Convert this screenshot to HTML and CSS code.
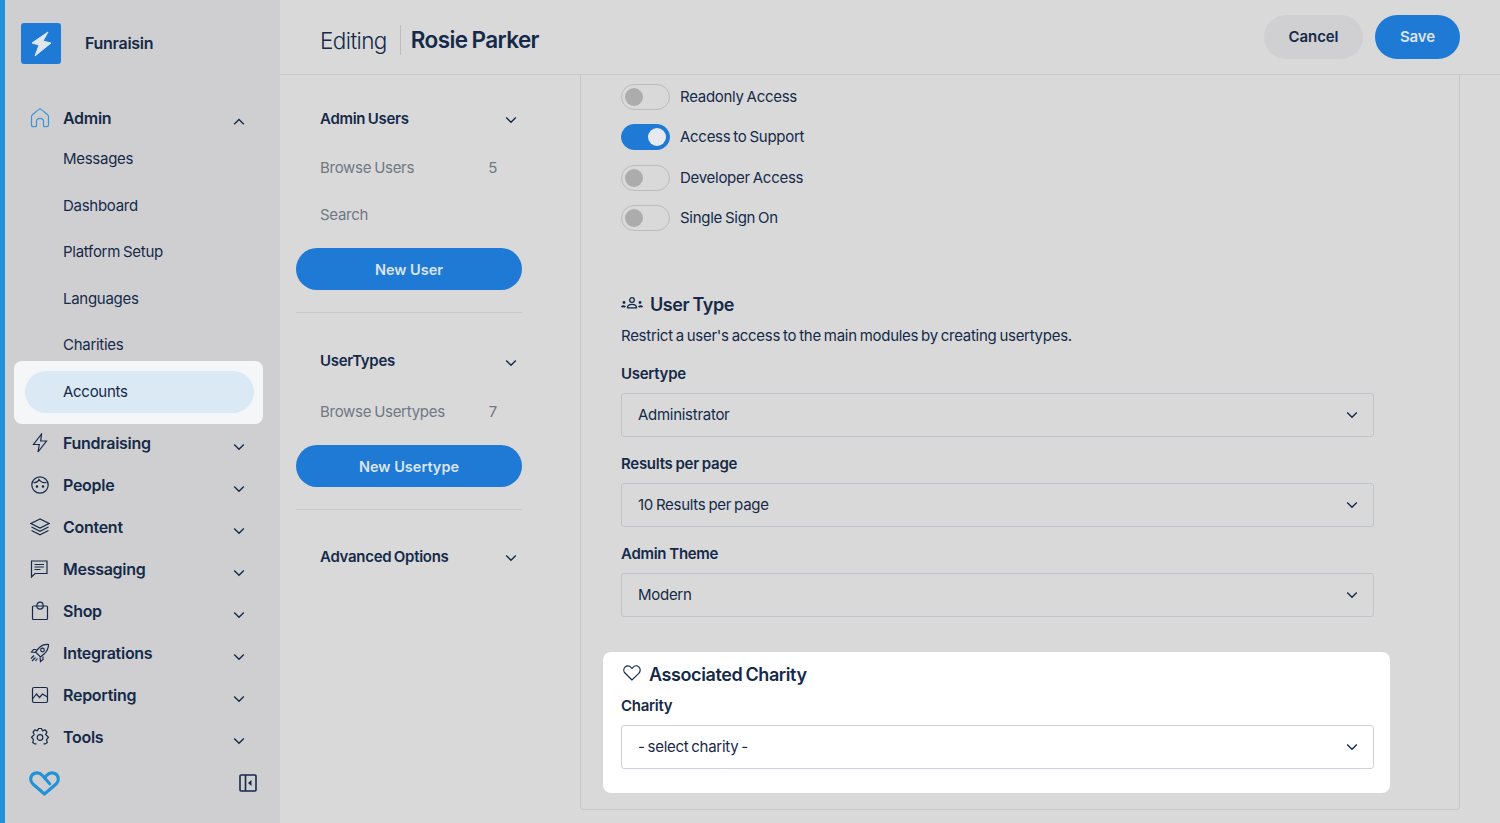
FILE: index.html
```html
<!DOCTYPE html>
<html lang="en">
<head>
    <meta charset="UTF-8">
    <meta name="viewport" content="width=device-width, initial-scale=1.0">
    <title>Editing Rosie Parker</title>
    <link rel="stylesheet" href="styles.css">
</head>
<body>
<svg class="sprite" width="0" height="0">
    <symbol id="chev-down" viewBox="0 0 12 8"><path d="M1.2 1.5 6 6.2l4.8-4.7" fill="none" stroke="currentColor" stroke-width="1.4"/></symbol>
    <symbol id="chev-up" viewBox="0 0 12 8"><path d="M1.2 6.2 6 1.5l4.8 4.7" fill="none" stroke="currentColor" stroke-width="1.4"/></symbol>
</svg>

<aside class="sidebar">
    <div class="brand">
        <div class="brand-logo">
            <svg viewBox="0 0 40 41" width="40" height="41"><path d="M27 9 11 20l7 2-4 11 16-13-8-2z" fill="#dfe8ef" stroke="#dfe8ef" stroke-width="1" stroke-linejoin="round"/></svg>
        </div>
        <span class="brand-name">Funraisin</span>
    </div>

    <nav class="nav">
        <div class="nav-item nav-item-open">
            <svg class="nav-icon nav-icon-home" viewBox="0 0 20 20"><path d="M1.500 17V8.600c0-.7.3-1.300.8-1.800L8.600 1.600c.8-.7 2-.7 2.800 0l6.300 5.200c.5.5.8 1.100.8 1.800V17c0 1-.7 1.700-1.700 1.700h-2.300c-.6 0-1-.4-1-1v-4.200c0-1.800-1.500-3.200-3.500-3.200s-3.500 1.400-3.500 3.200v4.200c0 .6-.4 1-1 1H3.200c-1 0-1.700-.7-1.700-1.700z"/></svg>
            <span>Admin</span>
            <svg class="chev"><use href="#chev-up"/></svg>
        </div>
        <div class="sub-list">
            <a class="sub-item">Messages</a>
            <a class="sub-item">Dashboard</a>
            <a class="sub-item">Platform Setup</a>
            <a class="sub-item">Languages</a>
            <a class="sub-item">Charities</a>
            <div class="sub-highlight"><a class="sub-active">Accounts</a></div>
        </div>
        <div class="nav-item">
            <svg class="nav-icon" viewBox="0 0 20 20"><path d="M11.500 1 3.500 11.500h5.800L8 19l8.500-11h-5.800z"/></svg>
            <span>Fundraising</span>
            <svg class="chev"><use href="#chev-down"/></svg>
        </div>
        <div class="nav-item">
            <svg class="nav-icon" viewBox="0 0 20 20"><circle cx="10" cy="10" r="8.200"/><path d="M3.500 7.500C6 8 8 6.800 9 4.500c1.500 2.500 4 3.500 7.500 3"/><circle cx="7" cy="11.500" r=".7" fill="currentColor"/><circle cx="13" cy="11.500" r=".7" fill="currentColor"/></svg>
            <span>People</span>
            <svg class="chev"><use href="#chev-down"/></svg>
        </div>
        <div class="nav-item">
            <svg class="nav-icon" viewBox="0 0 20 20"><path d="M10 2 1 6.500 10 11l9-4.500z"/><path d="m1.500 10 8.500 4.300 8.500-4.300"/><path d="m1.500 13.500 8.500 4.300 8.500-4.300"/></svg>
            <span>Content</span>
            <svg class="chev"><use href="#chev-down"/></svg>
        </div>
        <div class="nav-item">
            <svg class="nav-icon" viewBox="0 0 20 20"><path d="M1.500 2h15.500v12.500H5L1.500 18z"/><path d="M4.500 5.500h9.500M4.500 8h9.500M4.500 10.500h6"/></svg>
            <span>Messaging</span>
            <svg class="chev"><use href="#chev-down"/></svg>
        </div>
        <div class="nav-item">
            <svg class="nav-icon" viewBox="0 0 20 20"><path d="M3.500 5h13c.6 0 1 .4 1 1v11.500c0 .6-.4 1-1 1h-13c-.6 0-1-.4-1-1V6c0-.6.4-1 1-1z"/><path d="M6.800 5c0-2.300 1.300-3.800 3.200-3.800s3.200 1.500 3.200 3.800c0 1.800-1.300 3.200-3.200 3.200S6.800 6.800 6.800 5z"/></svg>
            <span>Shop</span>
            <svg class="chev"><use href="#chev-down"/></svg>
        </div>
        <div class="nav-item">
            <svg class="nav-icon" viewBox="0 0 20 20"><path d="M18.500 1.500c-4-.3-7.500 1-10 4L5.500 9l5 5 3.500-3c3-2.500 4.500-6 4.500-9.500z"/><circle cx="12.500" cy="7" r="1.800"/><path d="M6.500 6.500H3.500L1.500 9l4 .5M13 13.500v3l-2.500 2-.5-4M4 12.500 1 15.500M5.500 14.500 2 18M7.500 15.500l-2 2.500"/></svg>
            <span>Integrations</span>
            <svg class="chev"><use href="#chev-down"/></svg>
        </div>
        <div class="nav-item">
            <svg class="nav-icon" viewBox="0 0 20 20"><rect x="2.500" y="2.500" width="15" height="15" rx="1.500"/><path d="m2.500 14 4-5 3 3.500 3-3.500 5 3"/></svg>
            <span>Reporting</span>
            <svg class="chev"><use href="#chev-down"/></svg>
        </div>
        <div class="nav-item">
            <svg class="nav-icon" viewBox="0 0 20 20"><circle cx="10" cy="10.500" r="2.800"/><path d="M4.400 7.500 3 5l1.800-2 2.700.7L8.600 1.500h2.800l1.100 2.200 2.700-.7L17 5l-1.400 2.500 2.900 2.700-2 2.400.8 2.800-2 1.500h-1.800M4.400 7.500 1.500 10.200l2 2.400-.8 2.800 2 1.500h1.800"/></svg>
            <span>Tools</span>
            <svg class="chev"><use href="#chev-down"/></svg>
        </div>
    </nav>

    <div class="sidebar-foot">
        <svg class="foot-heart" viewBox="0 0 30 24"><path d="M15 22.200 3.800 12.500C.4 9.400 1.200 4 5 2.300c3-1.300 6-.3 8 2l7 8M15 22.200l11.200-9.700c3.400-3.100 2.600-8.500-1.200-10.200-3-1.300-6-.3-8 2l-2 2.500"/></svg>
        <svg class="foot-collapse" viewBox="0 0 18 18"><rect x="1" y="1" width="16" height="16" rx="1"/><path d="M6.500 1v16"/><path d="M12.500 6v6L9 9z" fill="currentColor" stroke="none"/></svg>
    </div>
</aside>

<div class="main">
    <header class="topbar">
        <div class="page-title">
            <span class="title-light">Editing</span>
            <span class="title-name">Rosie Parker</span>
        </div>
        <div class="top-actions">
            <button class="btn btn-cancel">Cancel</button>
            <button class="btn btn-save">Save</button>
        </div>
    </header>

    <div class="content">
        <div class="subnav">
            <div class="subnav-group">
                <div class="subnav-head"><span>Admin Users</span><svg class="chev"><use href="#chev-down"/></svg></div>
                <div class="subnav-link"><span>Browse Users</span><span>5</span></div>
                <div class="subnav-link"><span>Search</span></div>
                <button class="btn-wide">New User</button>
            </div>
            <div class="subnav-group">
                <div class="subnav-head"><span>UserTypes</span><svg class="chev"><use href="#chev-down"/></svg></div>
                <div class="subnav-link"><span>Browse Usertypes</span><span>7</span></div>
                <button class="btn-wide">New Usertype</button>
            </div>
            <div class="subnav-head"><span>Advanced Options</span><svg class="chev"><use href="#chev-down"/></svg></div>
        </div>

        <div class="panel">
            <div class="toggle-list">
                <div class="toggle-row"><span class="toggle"></span><span class="toggle-label">Readonly Access</span></div>
                <div class="toggle-row"><span class="toggle toggle-on"></span><span class="toggle-label">Access to Support</span></div>
                <div class="toggle-row"><span class="toggle"></span><span class="toggle-label">Developer Access</span></div>
                <div class="toggle-row"><span class="toggle"></span><span class="toggle-label">Single Sign On</span></div>
            </div>

            <section class="user-type">
                <h2 class="section-title">
                    <svg class="section-icon-users" viewBox="0 0 22 12"><circle cx="11" cy="3" r="2.300"/><path d="M6.500 10.800c0-2.500 2-3.500 4.500-3.500s4.500 1 4.500 3.500z"/><circle cx="3" cy="5.500" r="1.400" fill="currentColor" stroke="none"/><circle cx="19" cy="5.500" r="1.400" fill="currentColor" stroke="none"/><path d="M.8 10.200c.5-1.300 3-1.300 3.500 0M17.700 10.200c.5-1.300 3-1.300 3.500 0" stroke-width="1.800"/></svg>
                    User Type
                </h2>
                <p class="section-desc">Restrict a user's access to the main modules by creating usertypes.</p>
                <div class="field">
                    <label class="field-label">Usertype</label>
                    <div class="select"><span>Administrator</span><svg class="chev"><use href="#chev-down"/></svg></div>
                </div>
                <div class="field">
                    <label class="field-label">Results per page</label>
                    <div class="select"><span>10 Results per page</span><svg class="chev"><use href="#chev-down"/></svg></div>
                </div>
                <div class="field">
                    <label class="field-label">Admin Theme</label>
                    <div class="select"><span>Modern</span><svg class="chev"><use href="#chev-down"/></svg></div>
                </div>
            </section>

            <section class="charity-card">
                <h2 class="section-title">
                    <svg class="section-icon-heart" viewBox="0 0 18 16"><path d="M9 15 2.200 8.300C.4 6.500.4 3.700 2 2.100c1.700-1.600 4.400-1.500 6 .2l1 1 1-1c1.600-1.700 4.300-1.800 6-.2 1.600 1.600 1.600 4.400-.2 6.200z"/></svg>
                    Associated Charity
                </h2>
                <div class="field">
                    <label class="field-label">Charity</label>
                    <div class="select"><span>- select charity -</span><svg class="chev"><use href="#chev-down"/></svg></div>
                </div>
            </section>
        </div>
    </div>
</div>
</body>
</html>
```

FILE: styles.css
```css
* {
    box-sizing: border-box;
}
html, body {
    height: 100%;
}
body {
    margin: 0;
    display: flex;
    height: 823px;
    overflow: hidden;
    background-color: #d9d9d9;
    color: #152a49;
    font-family: Inter, "Liberation Sans", sans-serif;
    font-size: 15px;
    letter-spacing: -0.28px;
    word-spacing: -1px;
}
.sprite {
    position: absolute;
}
.chev {
    width: 12px;
    height: 8px;
    flex: none;
    color: #152a49;
}

/* Sidebar */
.sidebar {
    width: 280px;
    flex: none;
    display: flex;
    flex-direction: column;
    background-color: #cfcfd1;
    border-left: 5px solid #2391d6;
}
.brand {
    height: 98px;
    display: flex;
    align-items: flex-start;
    padding: 23px 0 0 16px;
}
.brand-logo {
    width: 40px;
    height: 41px;
    background-color: #1f7ad6;
    border-radius: 3px;
}
.brand-name {
    margin: 10px 0 0 24px;
    font-size: 16px;
    font-weight: 600;
}
.nav-item {
    height: 42px;
    display: flex;
    align-items: center;
    padding-left: 25px;
    font-size: 16px;
    font-weight: 600;
}
.nav-item span {
    flex: 1;
    margin-left: 13px;
}
.nav-item .chev {
    margin: 8px 35px 0 0;
}
.nav-item-open {
    height: 40px;
}
.nav-icon {
    width: 20px;
    height: 20px;
    fill: none;
    stroke: currentColor;
    stroke-width: 1.2;
}
.nav-icon-home {
    color: #3d94d4;
}
.sub-list {
    display: flex;
    flex-direction: column;
    margin-top: -2.5px;
}
.sub-item {
    height: 46.5px;
    display: flex;
    align-items: center;
    padding-left: 58px;
}
.sub-highlight {
    margin: -7.5px 17px -2px 9px;
    height: 63px;
    padding: 10px 9px 11px 11px;
    background-color: #f5f6f8;
    border-radius: 8px;
}
.sub-active {
    height: 42px;
    display: flex;
    align-items: center;
    padding-left: 38px;
    background-color: #dbe9f4;
    border-radius: 21px;
}
.sidebar-foot {
    display: flex;
    align-items: center;
    justify-content: space-between;
    padding: 13px 23px 0 24px;
}
.foot-heart {
    width: 31px;
    height: 25px;
    fill: none;
    stroke: #2391d6;
    stroke-width: 3;
    stroke-linecap: round;
}
.foot-collapse {
    width: 18px;
    height: 18px;
    fill: none;
    stroke: #152a49;
    stroke-width: 1.6;
}

/* Main */
.main {
    flex: 1;
    display: flex;
    flex-direction: column;
    min-width: 0;
}
.topbar {
    height: 75px;
    flex: none;
    display: flex;
    align-items: center;
    justify-content: space-between;
    padding: 0 40px;
    border-bottom: 1px solid #c9c9c9;
}
.page-title {
    display: flex;
    align-items: center;
    font-size: 22.5px;
    letter-spacing: -0.6px;
    margin-top: 6px;
}
.title-light {
    font-weight: 300;
    padding-right: 13px;
}
.title-name {
    font-weight: 600;
    padding-left: 10px;
    line-height: 30px;
    border-left: 1px solid #bdbdbd;
}
.top-actions {
    display: flex;
    gap: 12px;
    margin-top: -1px;
}
.btn {
    height: 44px;
    border: none;
    border-radius: 22px;
    font-family: inherit;
    font-size: 15px;
    font-weight: 600;
    letter-spacing: -0.1px;
}
.btn-cancel {
    width: 99px;
    background-color: #d0d0d2;
    color: #152a49;
}
.btn-save {
    width: 85px;
    background-color: #1f7ad6;
    color: #dbe5ee;
}
.content {
    flex: 1;
    display: flex;
    min-height: 0;
}

/* Second column */
.subnav {
    width: 300px;
    flex: none;
    padding: 0 58px 0 16px;
}
.subnav-group {
    padding-bottom: 22px;
    border-bottom: 1px solid #c9c9c9;
}
.subnav-head {
    height: 86px;
    display: flex;
    align-items: center;
    justify-content: space-between;
    padding: 7px 5px 1px 24px;
    font-weight: 600;
}
.subnav-head .chev {
    margin-top: 4px;
}
.subnav-group .subnav-head {
    height: 70px;
    padding-top: 16px;
    padding-bottom: 0;
}
.subnav-group + .subnav-group .subnav-head {
    height: 75.5px;
    padding-top: 20px;
}
.subnav-link {
    height: 46.5px;
    display: flex;
    align-items: center;
    justify-content: space-between;
    padding: 0 25px 1px 24px;
    color: #6f7884;
}
.btn-wide {
    display: block;
    width: 100%;
    height: 42px;
    margin-top: 10px;
    padding-bottom: 1px;
    border: none;
    border-radius: 21px;
    background-color: #1f7ad6;
    color: #dbe5ee;
    font-family: inherit;
    font-size: 14.5px;
    font-weight: 600;
}

/* Form panel */
.panel {
    width: 880px;
    height: 735px;
    flex: none;
    padding: 9px 0 0 40px;
    border: 1px solid #c6c6c6;
    border-top: none;
    border-radius: 0 0 4px 4px;
}
.toggle-list {
    display: flex;
    flex-direction: column;
    gap: 14.3px;
}
.toggle-row {
    display: flex;
    align-items: center;
    gap: 10px;
    height: 26px;
}
.toggle-label {
    margin-top: -1px;
}
.toggle {
    position: relative;
    width: 49px;
    height: 26px;
    border: 1px solid #b9bcc2;
    border-radius: 13px;
}
.toggle::after {
    content: "";
    position: absolute;
    left: 3px;
    top: 3px;
    width: 18px;
    height: 18px;
    border-radius: 50%;
    background-color: #acacac;
}
.toggle-on {
    background-color: #1f7ad6;
    border-color: #1f7ad6;
}
.toggle-on::after {
    left: 26px;
    background-color: #e6eaee;
}
.user-type {
    margin-top: 62px;
    width: 753px;
}
.section-title {
    display: flex;
    align-items: center;
    gap: 7px;
    margin: 0;
    font-size: 18px;
    font-weight: 600;
    line-height: 24px;
    letter-spacing: -0.4px;
}
.section-icon-users {
    width: 22px;
    height: 12px;
    margin-top: -3px;
    fill: none;
    stroke: currentColor;
    stroke-width: 1.3;
}
.section-icon-heart {
    width: 18px;
    height: 16px;
    margin: -4px 1px 0 2px;
    fill: none;
    stroke: currentColor;
    stroke-width: 1.2;
}
.section-desc {
    margin: 8px 0 0;
    line-height: 22px;
}
.field-label {
    display: block;
    margin-bottom: 9px;
    font-weight: 600;
    line-height: 20px;
    word-spacing: -0.5px;
}
.field {
    margin-top: 17px;
}
.select {
    height: 44px;
    display: flex;
    align-items: center;
    justify-content: space-between;
    padding: 0 15px 0 16px;
    border: 1px solid #bfc3cb;
    border-radius: 3px;
}
.charity-card {
    width: 787px;
    height: 141px;
    margin: 35px 0 0 -18px;
    padding: 11px 16px 0 18px;
    background-color: #fff;
    border-radius: 8px;
}
.charity-card .field {
    margin-top: 9px;
}
.charity-card .select {
    border-color: #cdd2db;
}
```
